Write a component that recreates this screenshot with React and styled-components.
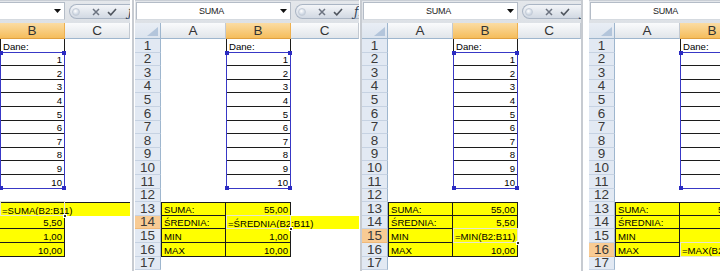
import React from 'react';
import styled, { createGlobalStyle } from 'styled-components';

const GlobalStyle = createGlobalStyle`
  html, body {
    margin: 0;
    padding: 0;
    background: #fff;
    overflow: hidden;
  }
  body {
    font-family: "Liberation Sans", Arial, sans-serif;
  }
`;

// row heights of rows 1..17 (13.6px average, rounded)
const ROW_H = [14, 13, 14, 13, 14, 14, 13, 14, 13, 14, 14, 13, 14, 13, 14, 14, 13];
const LABELS = ['SUMA:', 'ŚREDNIA:', 'MIN', 'MAX'];

const PANELS = [
  { width: 130, clipLeft: true, lastCol: 65, values: ['', '5,50', '1,00', '10,00'], edit: 0, formula: '=SUMA(B2:B11)', span: 2 },
  { width: 224, lastCol: 68, values: ['55,00', '', '1,00', '10,00'], edit: 1, formula: '=ŚREDNIA(B2:B11)', span: 2 },
  { width: 219, lastCol: 63, values: ['55,00', '5,50', '', '10,00'], edit: 2, formula: '=MIN(B2:B11)', span: 1 },
  { width: 131, lastCol: 65, values: ['55,00', '5,50', '1,00', ''], edit: 3, formula: '=MAX(B2:B11)', span: 2 },
];

const SEPARATORS = [
  { before: 2, after: 1 },
  { before: 1, after: 0 },
  { before: 0, after: 6 },
];

const Strip = styled.div`
  display: flex;
  width: 720px;
  height: 271px;
  overflow: hidden;
  background: #fff;
`;

const Panel = styled.div`
  display: flex;
  justify-content: ${p => (p.$clipLeft ? 'flex-end' : 'flex-start')};
  width: ${p => p.$width}px;
  flex-shrink: 0;
  overflow: hidden;
`;

const Separator = styled.div`
  flex-shrink: 0;
  width: 2px;
  background: #c7cbd1;
  border-left: ${p => p.$before}px solid #fff;
  border-right: ${p => p.$after}px solid #fff;
`;

const Sheet = styled.div`
  flex-shrink: 0;
  display: grid;
  grid-template-columns: 26px 65px 65px ${p => p.$lastCol}px;
  grid-template-rows: 23px 16px ${ROW_H.map(h => h + 'px').join(' ')};
  height: 271px;
  align-content: start;
`;

const FormulaBar = styled.div`
  grid-column: 1 / -1;
  grid-row: 1;
  display: flex;
  align-items: flex-start;
  background: linear-gradient(#e4e7eb, #dde1e6);
  border-top: 1px solid #c9ced5;
  box-sizing: border-box;
  overflow: hidden;
`;

const NameBox = styled.div`
  flex-shrink: 0;
  width: 155px;
  height: 18px;
  margin: 1px 0 0 1px;
  box-sizing: border-box;
  background: #fff;
  border: 1px solid #b4bcc7;
  border-bottom-color: #d5dae0;
  display: flex;
  align-items: center;
`;

const NameText = styled.span`
  flex: 1;
  text-align: center;
  font-size: 9px;
  color: #222;
  letter-spacing: -0.2px;
  padding-left: 6px;
`;

const DropArrow = styled.svg`
  flex-shrink: 0;
  margin-right: 3px;
`;

const Pill = styled.div`
  flex: 1 0 auto;
  height: 15px;
  margin: 3px 0 0 4px;
  box-sizing: border-box;
  border: 1px solid #aab5c4;
  border-right: none;
  border-radius: 8px 0 0 8px;
  background: linear-gradient(#f3f5f8, #d2d9e3);
  display: flex;
  align-items: center;
  min-width: 80px;
`;

const Grip = styled.span`
  width: 8px;
  height: 8px;
  margin-left: 2px;
  border-radius: 50%;
  background: radial-gradient(circle at 40% 35%, #ffffff, #c9d3e0 70%);
  border: 1px solid #c4ccd7;
  box-sizing: border-box;
`;

const PillIcon = styled.svg`
  flex-shrink: 0;
  margin-left: ${p => p.$gap}px;
`;

const Fx = styled.span`
  margin-left: 11px;
  font-family: "DejaVu Serif", "Liberation Serif", serif;
  font-style: italic;
  font-size: 12px;
  color: #2c3e57;
  line-height: 1;
`;

const Corner = styled.div`
  grid-column: 1;
  grid-row: 2;
  background: linear-gradient(#e9eef5, #dce4ee);
  border-right: 1px solid #9eb6ce;
  border-bottom: 1px solid #9eb6ce;
  box-sizing: border-box;
  display: flex;
  align-items: flex-end;
  justify-content: flex-end;
  padding: 0 2px 2px 0;
`;

const ColHead = styled.div`
  grid-column: ${p => p.$col};
  grid-row: 2;
  display: flex;
  align-items: center;
  justify-content: center;
  font-size: 13.5px;
  color: #333;
  box-sizing: border-box;
  background: ${p =>
    p.$active ? 'linear-gradient(#fbdca3, #f5bd5c)' : 'linear-gradient(#fafbfc, #e1e5ea)'};
  border-right: 1px solid ${p => (p.$active ? '#eeb04f' : '#c3c9d1')};
  border-bottom: 1px solid ${p => (p.$active ? '#e0a040' : '#9eb6ce')};
`;

const RowHead = styled.div`
  grid-column: 1;
  grid-row: ${p => p.$row};
  display: flex;
  align-items: center;
  justify-content: center;
  font-size: 13.5px;
  line-height: 1;
  color: #3a3a3a;
  box-sizing: border-box;
  background: ${p => (p.$active ? '#f8cb94' : '#e2e9f3')};
  border-right: 1px solid #9eb6ce;
  border-bottom: 1px solid ${p => (p.$active ? '#f0b878' : '#c6d2e2')};
`;

const Cell = styled.div`
  grid-column: ${p => p.$col} / span ${p => p.$span || 1};
  grid-row: ${p => p.$row};
  box-sizing: border-box;
  display: flex;
  align-items: center;
  justify-content: ${p => (p.$right ? 'flex-end' : 'flex-start')};
  padding: 1px 2px 0 2px;
  font-size: 9.6px;
  color: #000;
  white-space: nowrap;
  overflow: hidden;
  background: ${p => p.$fill || 'transparent'};
  border-right: ${p => (p.$boxed ? '1px solid #1c1c1c' : 'none')};
  border-bottom: ${p => (p.$boxed && !p.$noBottom ? '1px solid #1c1c1c' : 'none')};
  border-left: ${p => (p.$left ? '1px solid #1c1c1c' : 'none')};
  border-top: ${p => (p.$top ? '1px solid #1c1c1c' : 'none')};
`;

const RangeBox = styled.div`
  grid-column: 3;
  grid-row: 4 / 14;
  position: relative;
  z-index: 2;
  box-sizing: border-box;
  border: 1px solid #3838c6;
  margin-top: -1px;
`;

const Handle = styled.span`
  position: absolute;
  width: 4px;
  height: 4px;
  background: #2b2bc2;
  ${p => (p.$top ? 'top: -2px;' : 'bottom: -2px;')}
  ${p => (p.$leftSide ? 'left: -2px;' : 'right: -2px;')}
`;

const EditFrame = styled.div`
  grid-column: 3;
  grid-row: ${p => p.$row};
  position: relative;
  z-index: 3;
  box-sizing: border-box;
  border: 1px solid #e6e6cf;
  margin: -1px 0 0 0;
`;

const FillDot = styled.span`
  position: absolute;
  right: -3px;
  bottom: -3px;
  width: 4px;
  height: 4px;
  background: #333;
  border: 1px solid #fff;
  box-sizing: border-box;
`;

const YELLOW = '#ffff00';

function Spreadsheet({ data }) {
  const items = [];
  for (let r = 1; r <= 17; r++) {
    const gr = r + 2;
    const statIdx = r - 13;
    items.push(
      <RowHead key={'h' + r} $row={gr} $active={statIdx === data.edit}>
        {r}
      </RowHead>
    );
    if (r === 1) {
      items.push(
        <Cell key="b1" $row={gr} $col={3} $boxed $left $noBottom>
          Dane:
        </Cell>
      );
    } else if (r >= 2 && r <= 11) {
      items.push(
        <Cell key={'b' + r} $row={gr} $col={3} $boxed $left $right>
          {r - 1}
        </Cell>
      );
    } else if (statIdx >= 0 && statIdx <= 3) {
      items.push(
        <Cell key={'a' + r} $row={gr} $col={2} $boxed $left $top={r === 13} $fill={YELLOW}>
          {LABELS[statIdx]}
        </Cell>
      );
      if (statIdx === data.edit) {
        items.push(
          <Cell key={'b' + r} $row={gr} $col={3} $span={data.span} $top={r === 13} $fill={YELLOW}>
            {data.formula}
          </Cell>
        );
        items.push(
          <EditFrame key="frame" $row={gr}>
            <FillDot />
          </EditFrame>
        );
      } else {
        items.push(
          <Cell key={'b' + r} $row={gr} $col={3} $boxed $right $top={r === 13} $fill={YELLOW}>
            {data.values[statIdx]}
          </Cell>
        );
      }
    }
  }

  return (
    <Sheet $lastCol={data.lastCol}>
      <FormulaBar>
        <NameBox>
          <NameText>SUMA</NameText>
          <DropArrow width="7" height="4" viewBox="0 0 7 4">
            <path d="M0 0h7L3.5 4z" fill="#111" />
          </DropArrow>
        </NameBox>
        <Pill>
          <Grip />
          <PillIcon $gap={12} width="8" height="8" viewBox="0 0 8 8">
            <path d="M1 1l6 6M7 1L1 7" stroke="#6c7380" strokeWidth="1.5" />
          </PillIcon>
          <PillIcon $gap={7} width="10" height="8" viewBox="0 0 10 8">
            <path d="M1 4.2l2.8 2.6L9 1" stroke="#50565f" strokeWidth="1.6" fill="none" />
          </PillIcon>
          <Fx>ƒx</Fx>
        </Pill>
      </FormulaBar>
      <Corner>
        <svg width="11" height="9" viewBox="0 0 11 9">
          <path d="M11 0v9H0z" fill="#b3c5db" />
        </svg>
      </Corner>
      <ColHead $col={2}>A</ColHead>
      <ColHead $col={3} $active>B</ColHead>
      <ColHead $col={4}>C</ColHead>
      {items}
      <RangeBox>
        <Handle $top $leftSide />
        <Handle $top />
        <Handle $leftSide />
        <Handle />
      </RangeBox>
    </Sheet>
  );
}

export default function App() {
  return (
    <>
      <GlobalStyle />
      <Strip>
        {PANELS.map((p, i) => (
          <React.Fragment key={i}>
            <Panel $width={p.width} $clipLeft={p.clipLeft}>
              <Spreadsheet data={p} />
            </Panel>
            {i < SEPARATORS.length && (
              <Separator $before={SEPARATORS[i].before} $after={SEPARATORS[i].after} />
            )}
          </React.Fragment>
        ))}
      </Strip>
    </>
  );
}
